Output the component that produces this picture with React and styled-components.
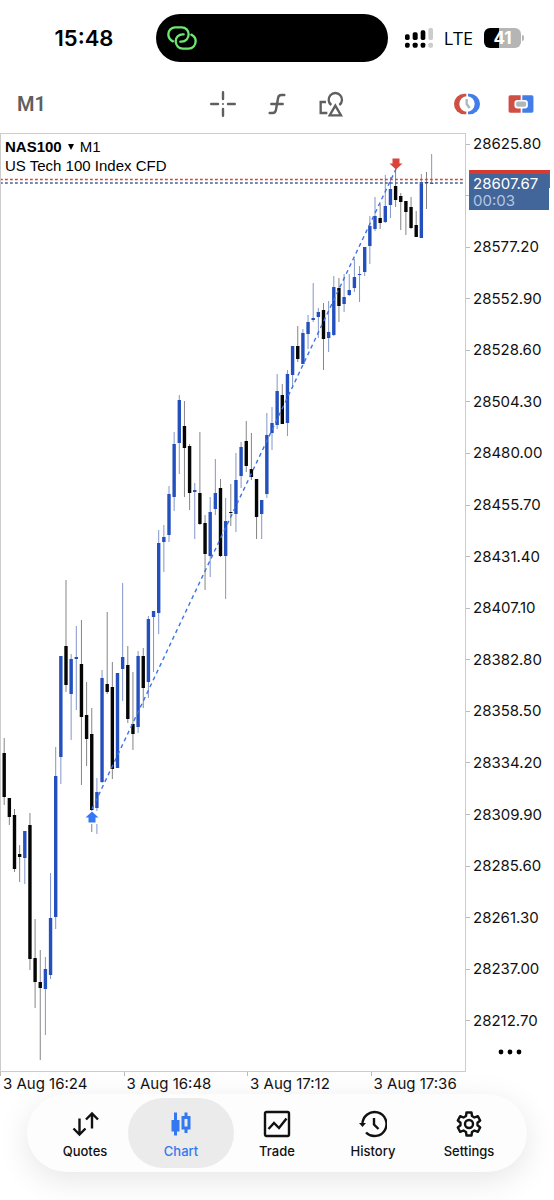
import React from 'react';
import styled, { createGlobalStyle } from 'styled-components';
import { PiFunctionBold } from 'react-icons/pi';

const GlobalStyle = createGlobalStyle`
* {
  box-sizing: border-box;
}
body {
  margin: 0;
  background: #FFFFFF;
  color: #111111;
  font-family: Inter, sans-serif;
}
button {
  border: 0;
  padding: 0;
  background: none;
  color: inherit;
  font: inherit;
  cursor: pointer;
}
svg {
  display: block;
}
`;

const priceLabels = [
  '28625.80', '', '28577.20', '28552.90', '28528.60', '28504.30',
  '28480.00', '28455.70', '28431.40', '28407.10', '28382.80', '28358.50',
  '28334.20', '28309.90', '28285.60', '28261.30', '28237.00', '28212.70',
];

const timeLabels = ['3 Aug 16:24', '3 Aug 16:48', '3 Aug 17:12', '3 Aug 17:36'];

// direction, high, body top, body bottom, low
const candles = [
  ['down', 738, 753, 797, 805], ['down', 798, 798, 817, 825],
  ['down', 809, 815, 869, 872], ['down', 845, 854, 857, 882],
  ['up', 831, 831, 858, 884], ['down', 813, 825, 959, 970],
  ['down', 919, 958, 982, 1008], ['down', 950, 982, 988, 1060],
  ['up', 957, 969, 989, 1035], ['up', 873, 918, 975, 979],
  ['up', 747, 776, 917, 929], ['up', 656, 656, 757, 784],
  ['down', 580, 646, 685, 692], ['up', 654, 659, 694, 740],
  ['up', 626, 657, 659, 710], ['down', 620, 664, 717, 785],
  ['down', 682, 715, 739, 766], ['down', 708, 734, 810, 832],
  ['up', 778, 792, 808, 834], ['up', 670, 678, 782, 783],
  ['down', 612, 684, 692, 694], ['down', 662, 687, 769, 779],
  ['up', 673, 673, 768, 768], ['up', 583, 657, 669, 701],
  ['down', 646, 665, 719, 723], ['down', 672, 724, 734, 750],
  ['up', 651, 656, 727, 733], ['down', 648, 656, 688, 708],
  ['up', 616, 619, 682, 698], ['up', 611, 611, 617, 672],
  ['up', 530, 543, 613, 634], ['up', 525, 537, 542, 572],
  ['up', 486, 494, 535, 542], ['up', 432, 444, 497, 511],
  ['up', 395, 400, 443, 474], ['down', 401, 426, 448, 497],
  ['down', 444, 446, 493, 510], ['up', 483, 490, 492, 539],
  ['down', 432, 493, 524, 525], ['down', 515, 523, 554, 590],
  ['up', 497, 512, 556, 577], ['up', 459, 493, 509, 515],
  ['down', 479, 488, 556, 557], ['up', 498, 521, 556, 599],
  ['down', 484, 512, 513, 526], ['up', 453, 480, 514, 532],
  ['up', 442, 447, 476, 488], ['down', 421, 441, 466, 472],
  ['down', 433, 469, 477, 480], ['down', 479, 479, 517, 539],
  ['up', 500, 500, 514, 539], ['up', 413, 435, 494, 498],
  ['up', 407, 423, 433, 450], ['up', 374, 391, 425, 429],
  ['down', 384, 395, 424, 424], ['up', 370, 374, 423, 436],
  ['up', 346, 346, 375, 388], ['down', 326, 346, 359, 362],
  ['up', 329, 333, 364, 364], ['up', 315, 322, 334, 349],
  ['up', 283, 318, 320, 322], ['up', 308, 312, 317, 338],
  ['down', 303, 310, 339, 370], ['up', 301, 332, 338, 352],
  ['up', 276, 287, 335, 336], ['down', 278, 288, 306, 322],
  ['up', 274, 297, 304, 312], ['up', 274, 290, 295, 296],
  ['up', 259, 277, 288, 292], ['up', 266, 274, 275, 302],
  ['up', 247, 247, 272, 276], ['up', 216, 226, 246, 264],
  ['up', 197, 216, 229, 231], ['down', 204, 218, 223, 229],
  ['up', 175, 206, 222, 223], ['up', 177, 189, 205, 218],
  ['down', 170, 186, 200, 207], ['down', 193, 196, 202, 230],
  ['down', 201, 201, 212, 235], ['down', 197, 207, 228, 229],
  ['down', 211, 225, 237, 237], ['up', 174, 182, 238, 238],
  ['down', 172, 182, 183, 209], ['up', 154, 183, 184, 184],
];

const candleColors = {
  up: { body: '#2450BE', wick: '#8396CB' },
  down: { body: '#050505', wick: '#858585' },
};

const StatusBar = styled.header`
display: grid;
grid-template-columns: 1fr 232px 1fr;
align-items: center;
padding: 14px 22px 0 12px;
`;

const Clock = styled.time`
text-align: center;
font-size: 22px;
font-weight: 600;
color: #000000;
`;

const Island = styled.div`
display: flex;
align-items: center;
height: 48px;
padding-left: 11px;
border-radius: 24px;
background: #000000;
`;

const StatusIcons = styled.div`
display: flex;
align-items: center;
justify-content: flex-end;
padding-right: 8px;
`;

const Network = styled.span`
margin: 0 11px;
font-family: "Open Sans", sans-serif;
font-size: 18px;
font-weight: 500;
line-height: 20px;
color: #000000;
`;

const Battery = styled.div`
width: 37px;
border-radius: 6px;
background: linear-gradient(90deg, #000000 ${(props) => props.$level}%, #B5B5B5 ${(props) => props.$level}%);
text-align: center;
font-size: 17px;
font-weight: 700;
line-height: 20px;
color: #FFFFFF;
`;

const BatteryCap = styled.div`
width: 2px;
height: 6px;
margin-left: 1px;
border-radius: 0 2px 2px 0;
background: #B5B5B5;
`;

const Toolbar = styled.nav`
display: grid;
grid-template-columns: 1fr auto 1fr;
align-items: center;
padding: 18px 6px 5px;
color: #5F5F5F;
`;

const ToolGroup = styled.div`
display: flex;
justify-content: ${(props) => (props.$end ? 'flex-end' : 'flex-start')};
`;

const ToolButton = styled.button`
display: flex;
align-items: center;
justify-content: center;
width: 54px;
height: 48px;
`;

const TimeframeButton = styled.button`
height: 48px;
padding-left: 11px;
font-family: Roboto, sans-serif;
font-size: 20px;
font-weight: 600;
`;

const ChartArea = styled.main`
display: grid;
grid-template-columns: 1fr 88px;
`;

const Plot = styled.section`
position: relative;
border: 1px solid #CCCCCC;
`;

const PlotSvg = styled.svg`
width: 100%;
height: auto;
`;

const Legend = styled.div`
position: absolute;
top: 3px;
left: 4px;
font-family: "Liberation Sans", sans-serif;
font-size: 15px;
line-height: 19px;
color: #000000;
`;

const SymbolButton = styled.button`
display: block;
`;

const Arrow = styled.span`
display: inline-block;
margin: 0 6px 2px;
border: solid transparent;
border-width: 6px 3px 0;
border-top-color: #000000;
`;

const PriceAxis = styled.aside`
position: relative;
display: flex;
flex-direction: column;
padding-top: 1px;
`;

const PriceList = styled.ul`
display: flex;
flex: 1;
flex-direction: column;
justify-content: space-between;
margin: 0;
padding: 0;
list-style-type: none;
`;

const PriceItem = styled.li`
height: 20px;
padding-left: 7px;
background: linear-gradient(#BBBBBB, #BBBBBB) left center / 4px 1px no-repeat;
font-size: 15px;
line-height: 20px;
`;

const PriceTag = styled.div`
position: absolute;
top: 37px;
right: 4px;
left: 3px;
padding: 4px 1px 0 0;
background: linear-gradient(#D93A2F, #D93A2F) left top / 100% 18px no-repeat;
`;

const PriceTagBody = styled.div`
padding: 1px 0 1px 4px;
background: #42659A;
font-size: 15px;
line-height: 17px;
color: #FFFFFF;
`;

const Countdown = styled.div`
color: #B4C6E2;
`;

const MoreButton = styled.button`
display: flex;
align-items: center;
justify-content: center;
height: 41px;
`;

const TimeAxis = styled.div`
display: grid;
grid-template-columns: repeat(4, 22.3%);
`;

const TimeItem = styled.time`
padding: 2px 0 0 3px;
background: linear-gradient(#BBBBBB, #BBBBBB) left top / 1px 4px no-repeat;
font-size: 15px;
line-height: 20px;
white-space: nowrap;
`;

const TabBar = styled.nav`
display: grid;
grid-template-columns: repeat(5, 1fr);
margin: 0 27px 28px;
padding: 4px 10px;
border-radius: 39px;
background: #FDFDFD;
box-shadow: 0 8px 32px rgba(0, 0, 0, .1);
`;

const TabLink = styled.a`
display: flex;
flex-direction: column;
align-items: center;
gap: 4px;
margin: 0 -5px;
padding: 12px 0 8px;
border-radius: 35px;
background: ${(props) => (props.$active ? '#EBEBEB' : 'transparent')};
color: ${(props) => (props.$active ? '#3478F0' : '#111111')};
font-size: 13px;
font-weight: 500;
line-height: 18px;
text-decoration: none;
`;

const LinkIcon = () => (
  <svg width="30" height="24" viewBox="500 80 90 70" fill="none" stroke="#6FE873" strokeWidth="7" strokeLinecap="round">
    <path d="M518 125C509 121 504 113 504 104C504 92 513 83 525 83H544C556 83 565 92 565 104C565 116 556 126 544 126H540" />
    <path d="M573 105C581 109 586 116 586 125C586 137 577 147 565 147H547C535 147 526 137 526 125C526 113 535 104 547 104H550" />
  </svg>
);

const SignalIcon = () => (
  <svg width="28" height="20" viewBox="0 0 84 60">
    <rect x="0" y="19" width="14" height="17" rx="5" />
    <rect x="23" y="13" width="15" height="23" rx="5" />
    <rect x="47" y="7" width="14" height="29" rx="5" />
    <rect x="70" y="0" width="14" height="36" rx="5" fill="#CCCCCC" />
    <rect x="0" y="44" width="14" height="15" rx="5" />
    <rect x="23" y="44" width="15" height="15" rx="5" />
    <rect x="47" y="44" width="14" height="15" rx="5" />
    <rect x="70" y="44" width="14" height="15" rx="5" fill="#CCCCCC" />
  </svg>
);

const CrosshairIcon = () => (
  <svg width="26" height="26" viewBox="0 0 26 26" stroke="currentColor" strokeWidth="2.4" strokeLinecap="round">
    <path d="M13 1.2V8M13 18v6.8M1.2 13H8M18 13h6.8" />
    <circle cx="13" cy="13" r="1" fill="currentColor" stroke="none" />
  </svg>
);

const ShapesIcon = () => (
  <svg width="25" height="26" viewBox="122 272 75 78" fill="none" stroke="currentColor" strokeWidth="7">
    <path d="M143 305H127V338H147" />
    <path d="M159 314A20 20 0 1 1 183 314" />
    <path d="M171 316L188 345H154Z" />
  </svg>
);

const ClockIcon = () => (
  <svg width="26" height="22" viewBox="537 280 78 66">
    <path d="M574 282H568A31 31 0 0 0 568 344H574Z" fill="#CF4F45" />
    <path d="M579 282H584A31 31 0 0 1 584 344H579Z" fill="#437DE8" />
    <circle cx="576" cy="313" r="23" fill="#FFFFFF" />
    <path d="M575 298V313L584 325" fill="none" stroke="#AEB7BD" strokeWidth="7" />
  </svg>
);

const OneClickIcon = () => (
  <svg width="26" height="18" viewBox="695 285 78 55">
    <path d="M733 286H701A5 5 0 0 0 696 291V334A5 5 0 0 0 701 339H733Z" fill="#CF4F45" />
    <path d="M738 286H767A5 5 0 0 1 772 291V334A5 5 0 0 1 767 339H738Z" fill="#437DE8" />
    <rect x="714" y="300" width="41" height="26" rx="9" fill="#FFFFFF" />
    <rect x="719" y="305" width="31" height="16" rx="6" fill="#AEB7BD" />
  </svg>
);

const QuotesIcon = () => (
  <svg width="28" height="28" viewBox="0 0 28 28" fill="none" stroke="currentColor" strokeWidth="2.4">
    <path d="M8.5 8.5V24.500M2.5 18.500L8.5 24.500L14.5 18.500M21 18.500V3.500M15 9.500L21 3.500L27 9.500" />
  </svg>
);

const CandlesIcon = () => (
  <svg width="28" height="28" viewBox="0 0 28 28" fill="currentColor">
    <path d="M7 2.500H10V10H12.5V21.500H10V25.500H7V21.500H4.500V10H7Z" />
    <path fillRule="evenodd" d="M17.500 2.500H20.500V6H23.500V19.500H20.500V23H17.500V19.500H14.500V6H17.500ZM17.500 9V16.500H20.500V9Z" />
  </svg>
);

const TradeIcon = () => (
  <svg width="28" height="28" viewBox="0 0 28 28" fill="none" stroke="currentColor" strokeWidth="2.4">
    <rect x="2" y="2" width="24" height="24" rx="1.500" />
    <path d="M5.500 19L11 13L16 18L23.500 8.500" />
  </svg>
);

const HistoryIcon = () => (
  <svg width="28" height="28" viewBox="0 0 28 28" fill="none" stroke="currentColor" strokeWidth="2.4">
    <path d="M3.500 14A12 12 0 1 1 7 22.500" />
    <path d="M15 8V14.500L19.500 19" />
    <path d="M0 13H7L3.500 17Z" fill="currentColor" stroke="none" />
  </svg>
);

const SettingsIcon = () => (
  <svg width="28" height="28" viewBox="0 0 28 28" fill="none" stroke="currentColor" strokeWidth="2.4" strokeLinejoin="round">
    <path d="M11.500 2.500H16.500L17 6L19.500 7.500L22.800 6.200L25.200 10.500L22.500 12.700V15.300L25.200 17.500L22.800 21.800L19.500 20.500L17 22L16.500 25.500H11.500L11 22L8.500 20.500L5.200 21.800L2.800 17.500L5.500 15.300V12.700L2.800 10.500L5.200 6.200L8.500 7.500L11 6Z" />
    <circle cx="14" cy="14" r="4" />
  </svg>
);

const tabs = [
  { name: 'Quotes', Icon: QuotesIcon },
  { name: 'Chart', Icon: CandlesIcon },
  { name: 'Trade', Icon: TradeIcon },
  { name: 'History', Icon: HistoryIcon },
  { name: 'Settings', Icon: SettingsIcon },
];

const Candle = ({ index, data }) => {
  const [direction, high, top, bottom, low] = data;
  const colors = candleColors[direction];
  const x = 4.2 + index * 5.15;
  return (
    <g>
      <line x1={x} x2={x} y1={high} y2={low} stroke={colors.wick} />
      <rect x={x - 1.7} y={top} width="3.4" height={bottom - top} fill={colors.body} />
    </g>
  );
};

const CandleChart = () => (
  <PlotSvg viewBox="1 134 464 937" role="img" aria-label="NAS100 candlestick chart">
    {candles.map((data, index) => (
      <Candle key={index} index={index} data={data} />
    ))}
    <line x1="0" x2="466" y1="179.500" y2="179.500" stroke="#D8443B" strokeWidth="1.600" strokeDasharray="2.800 2.200" />
    <line x1="0" x2="466" y1="183" y2="183" stroke="#42659A" strokeWidth="1.600" strokeDasharray="2.800 2.200" />
    <line x1="92" x2="396" y1="809" y2="169" stroke="#3B72EA" strokeWidth="1.400" strokeDasharray="4 3.500" />
    <rect x="85" y="811" width="14" height="13" fill="#FFFFFF" />
    <path d="M92 811.500L98.500 817.500H95.500V822.500H88.500V817.500H85.500Z" fill="#3478F6" />
    <path d="M392.500 158.500H399.500V163.500H402.500L396 169.500L389.500 163.500H392.500Z" fill="#D8443B" />
  </PlotSvg>
);

const App = () => (
  <>
    <GlobalStyle />
    <StatusBar>
      <Clock>15:48</Clock>
      <Island><LinkIcon /></Island>
      <StatusIcons>
        <SignalIcon />
        <Network>LTE</Network>
        <Battery $level={41}>41</Battery>
        <BatteryCap />
      </StatusIcons>
    </StatusBar>
    <Toolbar>
      <ToolGroup>
        <TimeframeButton type="button">M1</TimeframeButton>
      </ToolGroup>
      <ToolGroup>
        <ToolButton type="button" aria-label="Crosshair"><CrosshairIcon /></ToolButton>
        <ToolButton type="button" aria-label="Indicators"><PiFunctionBold size={26} /></ToolButton>
        <ToolButton type="button" aria-label="Objects"><ShapesIcon /></ToolButton>
      </ToolGroup>
      <ToolGroup $end>
        <ToolButton type="button" aria-label="Pending order"><ClockIcon /></ToolButton>
        <ToolButton type="button" aria-label="One click trading"><OneClickIcon /></ToolButton>
      </ToolGroup>
    </Toolbar>
    <ChartArea>
      <Plot>
        <CandleChart />
        <Legend>
          <SymbolButton type="button">
            <b>NAS100</b>
            <Arrow />
            M1
          </SymbolButton>
          US Tech 100 Index CFD
        </Legend>
      </Plot>
      <PriceAxis>
        <PriceList>
          {priceLabels.map((price, index) => (
            <PriceItem key={index}>{price}</PriceItem>
          ))}
        </PriceList>
        <MoreButton type="button" aria-label="More">
          <svg width="24" height="6" viewBox="0 0 24 6">
            <circle cx="3" cy="3" r="2.400" />
            <circle cx="12" cy="3" r="2.400" />
            <circle cx="21" cy="3" r="2.400" />
          </svg>
        </MoreButton>
        <PriceTag>
          <PriceTagBody>
            28607.67
            <Countdown>00:03</Countdown>
          </PriceTagBody>
        </PriceTag>
      </PriceAxis>
    </ChartArea>
    <TimeAxis>
      {timeLabels.map((label) => (
        <TimeItem key={label}>{label}</TimeItem>
      ))}
    </TimeAxis>
    <TabBar>
      {tabs.map(({ name, Icon }) => (
        <TabLink key={name} href={`#${name.toLowerCase()}`} $active={name === 'Chart'}>
          <Icon />
          {name}
        </TabLink>
      ))}
    </TabBar>
  </>
);

export default App;
